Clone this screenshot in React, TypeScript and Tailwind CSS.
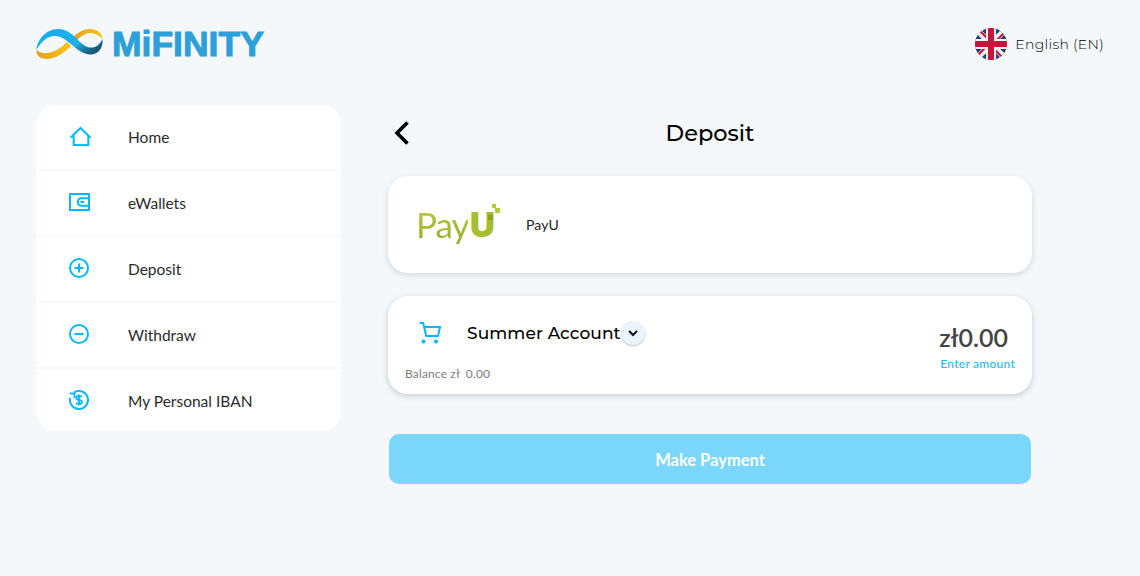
const lato = "font-['Lato','Liberation_Sans',sans-serif]";
const mont = "font-['Montserrat','Inter','Liberation_Sans',sans-serif]";

function Logo() {
  return (
    <svg width="68" height="32" viewBox="0 0 68 32" className="shrink-0">
      <defs>
        <linearGradient id="blue" x1="0" y1="0" x2="1" y2="0.6">
          <stop offset="0" stopColor="#10aef0" />
          <stop offset="0.7" stopColor="#1fb0e8" />
          <stop offset="1" stopColor="#165c78" />
        </linearGradient>
        <linearGradient id="gold" x1="0" y1="0" x2="1" y2="0">
          <stop offset="0" stopColor="#e3a020" />
          <stop offset="1" stopColor="#fcc30b" />
        </linearGradient>
      </defs>
      <path d="M0.5 22C0 27 4 31 11 31C20 31 29 24 35 18L31 14C26 19 19 24 12 25C7 25.500 3 24.500 0.500 22Z" fill="url(#gold)" />
      <path d="M37 9.500C42 4 48 1 54 1C61 1 66 5 66.500 11C63 7 58 4.500 53 5C49 5.500 45 8 41 12Z" fill="url(#gold)" />
      <path d="M0.500 22C1 12 10 1 22 1C32 1 38 8 43 13C48 18 52 20 56 19.500C61 19 64 16 66.500 11C67.500 20 62 27 54 26.500C46 26 41 21 36 17C31 13 26 8 19 8C11 8 5 14 0.500 22Z" fill="url(#blue)" />
    </svg>
  );
}

function Flag() {
  return (
    <svg width="32" height="32" viewBox="0 0 32 32" className="shrink-0">
      <defs>
        <clipPath id="fc"><circle cx="16" cy="16" r="16" /></clipPath>
      </defs>
      <g clipPath="url(#fc)">
        <rect width="32" height="32" fill="#1f3a78" />
        <path d="M0 0L32 32M32 0L0 32" stroke="#f2f2f2" strokeWidth="6" />
        <path d="M2 0L16 14M30 32L16 18M32 2L18 16M0 30L14 16" stroke="#c8133a" strokeWidth="2" />
        <path d="M16 0V32M0 16H32" stroke="#f2f2f2" strokeWidth="10" />
        <path d="M16 0V32M0 16H32" stroke="#c8133a" strokeWidth="6" />
      </g>
    </svg>
  );
}

const ic = "#04b8fc";

function HomeIcon() {
  return (
    <svg width="22" height="22" viewBox="0 0 22 22" fill="none" stroke={ic} strokeWidth="2">
      <path d="M10.500 2L19.500 10.800H18.300V19H3.700V10.800H1.500Z" />
    </svg>
  );
}
function WalletIcon() {
  return (
    <svg width="21" height="18" viewBox="0 0 21 18" fill="none" stroke={ic} strokeWidth="2">
      <rect x="1" y="1" width="19" height="16" />
      <path d="M20 5.200H12.500A3.600 3.600 0 0 0 12.500 12.800H20" />
      <path d="M11.500 9H15" />
    </svg>
  );
}
function PlusIcon() {
  return (
    <svg width="20" height="20" viewBox="0 0 20 20" fill="none" stroke={ic} strokeWidth="2">
      <circle cx="10" cy="10" r="9" />
      <path d="M10 5.500V14.500M5.500 10H14.500" />
    </svg>
  );
}
function MinusIcon() {
  return (
    <svg width="20" height="20" viewBox="0 0 20 20" fill="none" stroke={ic} strokeWidth="2">
      <circle cx="10" cy="10" r="9" />
      <path d="M5.500 10H14.500" />
    </svg>
  );
}
function IbanIcon() {
  return (
    <svg width="20" height="20" viewBox="0 0 20 20" fill="none" stroke={ic} strokeWidth="2">
      <path d="M5 2.500A9 9 0 1 1 1.200 8" />
      <path d="M0.800 3.500H5.500V8" strokeWidth="1.800" />
      <path d="M13 7.200C12.500 6.200 11.500 6 10 6C8.500 6 7.200 6.600 7.200 7.900C7.200 10.600 13 9.200 13 12C13 13.400 11.600 14 10 14C8.400 14 7.400 13.600 7 12.700M10 4.500V15.500" strokeWidth="1.800" />
    </svg>
  );
}
function CartIcon() {
  return (
    <svg width="22" height="22" viewBox="0 0 22 22" fill="none" stroke={ic} strokeWidth="2">
      <path d="M0.500 1H4.200L7.200 14H19L21 5H5" />
      <circle cx="4.500" cy="19.500" r="2" fill={ic} stroke="none" />
      <circle cx="17" cy="19.500" r="2" fill={ic} stroke="none" />
    </svg>
  );
}

const nav = [
  { label: "Home", icon: <HomeIcon />, cls: "ml-[34px] mr-[36px]" },
  { label: "eWallets", icon: <WalletIcon />, cls: "ml-[33px] mr-[37px] mb-[2px]" },
  { label: "Deposit", icon: <PlusIcon />, cls: "ml-[33px] mr-[37px] mb-[2px]" },
  { label: "Withdraw", icon: <MinusIcon />, cls: "ml-[33px] mr-[37px] mb-[2px]" },
  { label: "My Personal IBAN", icon: <IbanIcon />, cls: "ml-[33px] mr-[37px] mb-[2px]" },
];

export default function App() {
  return (
    <div className={`h-[576px] w-[1140px] overflow-hidden bg-[#f4f8fb] ${lato}`}>
      <header className="flex h-[105px] items-start justify-between pl-[36px] pr-[36px] pt-[28px]">
        <div className="flex items-center gap-[8px]">
          <Logo />
          <span className="font-['Liberation_Sans',sans-serif] text-[35.500px] font-bold leading-[32px] text-[#2e9fd9] [-webkit-text-stroke:1px_#2e9fd9]">MiFINITY</span>
        </div>
        <div className="flex items-center gap-[8px]">
          <Flag />
          <span className={`${mont} text-[14px] font-light leading-[32px] tracking-[0.3px] text-black`}>English (EN)</span>
        </div>
      </header>
      <div className="flex items-start pl-[36px]">
        <nav className="w-[305px] overflow-hidden rounded-[20px] bg-white">
          {nav.map((n, i) => (
            <div key={n.label} className={`flex items-center ${i < nav.length - 1 ? "h-[66px] border-b-2 border-[#f8f9fb]" : "h-[62px] pt-[2px]"}`}>
              <div className={`flex w-[22px] justify-start ${n.cls}`}>{n.icon}</div>
              <span className="pt-[2px] text-[15.5px] text-[#2b2b2b]">{n.label}</span>
            </div>
          ))}
        </nav>
        <main className="ml-[47px] w-[644px]">
          <div className="relative flex h-[56px] items-center justify-center">
            <svg width="16" height="24" viewBox="0 0 16 24" fill="none" stroke="#000" strokeWidth="3.600" className="absolute left-[5.500px] top-[16px]">
              <path d="M13.500 1.500L3 12L13.500 22.500" />
            </svg>
            <h1 className={`${mont} pt-[2px] text-[22.500px] font-medium text-black`}>Deposit</h1>
          </div>
          <section className="mt-[15px] flex h-[97px] items-center rounded-[20px] bg-white pl-[29px] shadow-[0_2px_6px_rgba(40,50,70,0.16)]">
            <div className="relative flex h-[44px] w-[84px] items-center">
              <span className="-ml-[1px] -mt-[1px] bg-linear-to-b from-[#bdd13c] to-[#93ab2a] bg-clip-text text-[35px] font-normal leading-[44px] tracking-[-1px] text-transparent">Pay</span>
              <span className="ml-[2px] mt-[1px] font-['Liberation_Sans',sans-serif] text-[33px] font-bold leading-[44px] text-[#a6bd2f] [-webkit-text-stroke:2px_#a6bd2f]">U</span>
              <span className="absolute left-[71px] top-[12px] size-[5px] bg-[#8da322]" />
              <span className="absolute right-[5px] top-[1.500px] size-[4px] bg-[#b5cc33]" />
              <span className="absolute right-[1px] top-[5.500px] size-[5px] bg-[#b5cc33]" />
            </div>
            <span className="ml-[25px] text-[14px] tracking-[0.1px] text-[#222]">PayU</span>
          </section>
          <section className="mt-[23px] flex h-[98px] justify-between rounded-[20px] bg-white pl-[17px] pr-[17px] shadow-[0_2px_6px_rgba(40,50,70,0.22)]">
            <div className="flex flex-col">
              <div className="mt-[25px] flex h-[24px] items-center pl-[14px]">
                <CartIcon />
                <span className={`${mont} ml-[26px] pt-[2px] text-[17px] font-medium tracking-[0.1px] text-black`}>Summer Account</span>
                <span className="flex size-[24px] items-center justify-center rounded-full bg-[#eaf4fc] shadow-[0_1px_2px_rgba(0,0,0,0.25)]">
                  <svg width="10" height="7" viewBox="0 0 10 7" fill="none" stroke="#111" strokeWidth="2"><path d="M1 1L5 5L9 1" /></svg>
                </span>
              </div>
              <div className="mt-[21px] text-[12px] leading-[16px] tracking-[0.15px] text-[#7d7d7d]">Balance zł&nbsp; 0.00</div>
            </div>
            <div className="flex flex-col items-end">
              <div className="mr-[7px] mt-[24px] text-[25px] font-semibold leading-[34px] text-[#444]">zł0.00</div>
              <div className="mt-[2px] text-[12px] font-medium leading-[16px] tracking-[0.25px] text-[#1cbcf9]">Enter amount</div>
            </div>
          </section>
          <button className="ml-[1px] mt-[40px] flex h-[50px] w-[642px] items-center justify-center rounded-[10px] bg-[#7ad7fb] pt-[3px] text-[16.500px] font-bold text-white">Make Payment</button>
        </main>
      </div>
    </div>
  );
}
